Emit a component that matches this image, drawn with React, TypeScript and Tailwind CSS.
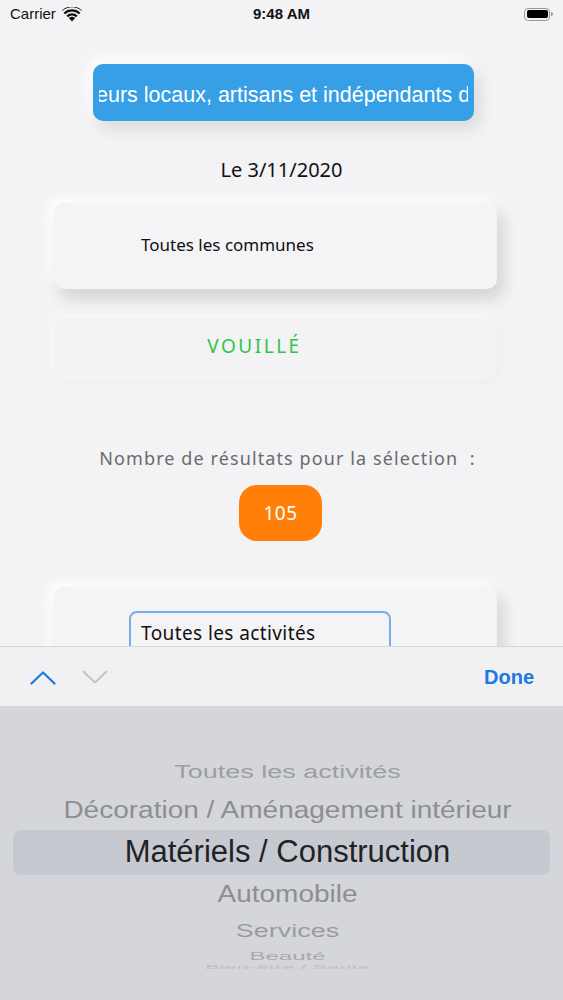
import React from "react";

const ui = { fontFamily: '"Noto Sans", "Open Sans", sans-serif' };
const ios = { fontFamily: '"Liberation Sans", Arial, sans-serif' };

function Wifi() {
  return (
    <svg width="20" height="15" viewBox="0 0 20 15">
      <path d="M10 14.5 L6.8 11 A4.6 4.6 0 0 1 13.2 11 Z" fill="#111" />
      <path d="M4.4 8.6 A8 8 0 0 1 15.6 8.6 L14.1 10.2 A5.9 5.9 0 0 0 5.9 10.2 Z" fill="#111" />
      <path d="M1.6 5.7 A12 12 0 0 1 18.4 5.7 L16.9 7.3 A9.8 9.8 0 0 0 3.1 7.3 Z" fill="#111" />
      <path d="M0 3.4 A14.5 14.5 0 0 1 20 3.4 L19.5 3.9 A14 14 0 0 0 0.5 3.9 Z" fill="#111" />
    </svg>
  );
}

function Battery() {
  return (
    <div className="flex items-center">
      <div className="w-[26px] h-[13px] rounded-[4px] border border-[#9a9a9a] p-[1.5px]">
        <div className="w-full h-full rounded-[2px] bg-black" />
      </div>
      <div className="w-[2px] h-[4px] rounded-r bg-[#9a9a9a] ml-[1px]" />
    </div>
  );
}

export default function App() {
  return (
    <div className="w-[563px] h-[1000px] overflow-hidden bg-[#f3f2f5] flex flex-col">
      <div className="h-[646px] shrink-0 overflow-hidden flex flex-col">
        {/* status bar */}
        <div className="h-[28px] shrink-0 flex items-center px-[10px]" style={ios}>
          <div className="flex items-center gap-[6px] w-[200px]">
            <span className="text-[15px] text-[#111]">Carrier</span>
            <Wifi />
          </div>
          <div className="flex-1 text-center text-[15px] font-bold text-[#111]">9:48 AM</div>
          <div className="w-[200px] flex justify-end">
            <Battery />
          </div>
        </div>

        {/* blue marquee */}
        <div className="mt-[36px] ml-[93px] w-[381px] h-[57px] shrink-0 rounded-[10px] bg-[#369fe6] shadow-[6px_8px_16px_rgba(0,0,0,0.10),-6px_-6px_14px_rgba(255,255,255,0.9)] flex items-center overflow-hidden px-[6px] pt-[6px]">
          <div className="w-full overflow-hidden whitespace-nowrap text-white text-[21.5px] leading-none" style={ios}>
            <span className="inline-block -ml-[3px]">eurs locaux, artisans et indépendants du</span>
          </div>
        </div>

        {/* date */}
        <div className="mt-[37px] shrink-0 text-center text-[20px] leading-[24px] text-[#111]" style={ui}>
          Le 3/11/2020
        </div>

        {/* communes card */}
        <div className="mt-[21px] ml-[54px] w-[443px] h-[86px] shrink-0 rounded-[10px] bg-[#f4f3f6] shadow-[6px_10px_16px_rgba(0,0,0,0.13),-6px_-6px_14px_rgba(255,255,255,0.95)] flex items-center pl-[87px]">
          <span className="text-[17px] text-[#111] -mt-[2px]" style={ui}>Toutes les communes</span>
        </div>

        {/* commune name */}
        <div className="mt-[29px] ml-[54px] w-[443px] h-[62px] shrink-0 rounded-[10px] bg-[#f3f2f5] shadow-[0_0_10px_rgba(0,0,0,0.05),-3px_-3px_8px_rgba(255,255,255,0.9)] flex items-center justify-center pr-[42px]">
          <span className="text-[19px] tracking-[2.5px] text-[#2fc548] -mt-[6px]" style={ui}>VOUILLÉ</span>
        </div>

        {/* count label */}
        <div className="mt-[65px] shrink-0 text-center pl-[12px] text-[18px] leading-[26px] tracking-[1.1px] text-[#6b6b6e]" style={ui}>
          Nombre de résultats pour la sélection&nbsp; :
        </div>

        {/* badge */}
        <div className="mt-[14px] ml-[239px] w-[83px] h-[56px] shrink-0 rounded-[18px] bg-[#ff7f09] flex items-center justify-center">
          <span className="text-[19px] tracking-[0.5px] text-white" style={ui}>105</span>
        </div>

        {/* activities card */}
        <div className="mt-[46px] ml-[54px] w-[443px] h-[120px] shrink-0 rounded-[10px] bg-[#f4f3f6] shadow-[6px_10px_16px_rgba(0,0,0,0.13),-6px_-6px_14px_rgba(255,255,255,0.95)] pt-[24px] pl-[75px]">
          <div className="w-[262px] h-[60px] rounded-[8px] border-2 border-[#79aee9] bg-[#f4f3f6] pl-[10px] pt-[6px]">
            <span className="text-[19px] tracking-[0.4px] text-[#111]" style={ui}>Toutes les activités</span>
          </div>
        </div>
      </div>

      {/* toolbar */}
      <div className="h-[60px] shrink-0 border-t border-[#d6d6d9] bg-[#f1f1f3] flex items-center px-[30px]">
        <svg width="26" height="15" viewBox="0 0 26 15" className="mt-[1px]">
          <polyline points="1.5,13.5 13,2.5 24.5,13.5" fill="none" stroke="#1a7ae0" strokeWidth="2.2" strokeLinecap="round" strokeLinejoin="round" />
        </svg>
        <svg width="26" height="15" viewBox="0 0 26 15" className="ml-[26px] mt-[1px]">
          <polyline points="1.5,1.5 13,12.5 24.5,1.5" fill="none" stroke="#c4c4c8" strokeWidth="2" strokeLinecap="round" strokeLinejoin="round" />
        </svg>
        <div className="flex-1" />
        <span className="text-[20px] font-bold text-[#1a7ae0] -mr-[1px]" style={ios}>Done</span>
      </div>

      {/* picker */}
      <div className="flex-1 bg-[#d4d6dc] flex flex-col pt-[48px] overflow-hidden" style={ios}>
        <div className="h-[37px] shrink-0 flex items-center justify-center pl-[12px]">
          <span className="text-[27px] text-[#9d9ea3] scale-y-[0.68] inline-block">Toutes les activités</span>
        </div>
        <div className="h-[37px] shrink-0 flex items-center justify-center pl-[12px]">
          <span className="text-[28px] text-[#8d8e93] scale-y-[0.85] inline-block whitespace-nowrap">Décoration / Aménagement intérieur</span>
        </div>
        <div className="mt-[2px] mx-[13px] h-[45px] shrink-0 rounded-[8px] bg-[#c7c9d0] flex items-center justify-center pl-[12px]">
          <span className="text-[31px] text-[#222226]">Matériels / Construction</span>
        </div>
        <div className="h-[38px] shrink-0 flex items-center justify-center pl-[12px]">
          <span className="text-[28px] text-[#8d8e93] scale-y-[0.88] inline-block">Automobile</span>
        </div>
        <div className="h-[36px] shrink-0 flex items-center justify-center pl-[12px]">
          <span className="text-[27px] text-[#9a9ba0] scale-y-[0.7] inline-block">Services</span>
        </div>
        <div className="h-[16px] shrink-0 flex items-center justify-center overflow-hidden pl-[12px]">
          <span className="text-[24px] text-[#a8a9ae] scale-y-[0.42] inline-block">Beauté</span>
        </div>
        <div className="h-[5px] shrink-0 flex items-start justify-center overflow-hidden pl-[12px]">
          <span className="text-[22px] leading-[10px] text-[#bdbec3] scale-y-[0.25] inline-block -mt-[3px]">Bien-être / Santé</span>
        </div>
      </div>
    </div>
  );
}
